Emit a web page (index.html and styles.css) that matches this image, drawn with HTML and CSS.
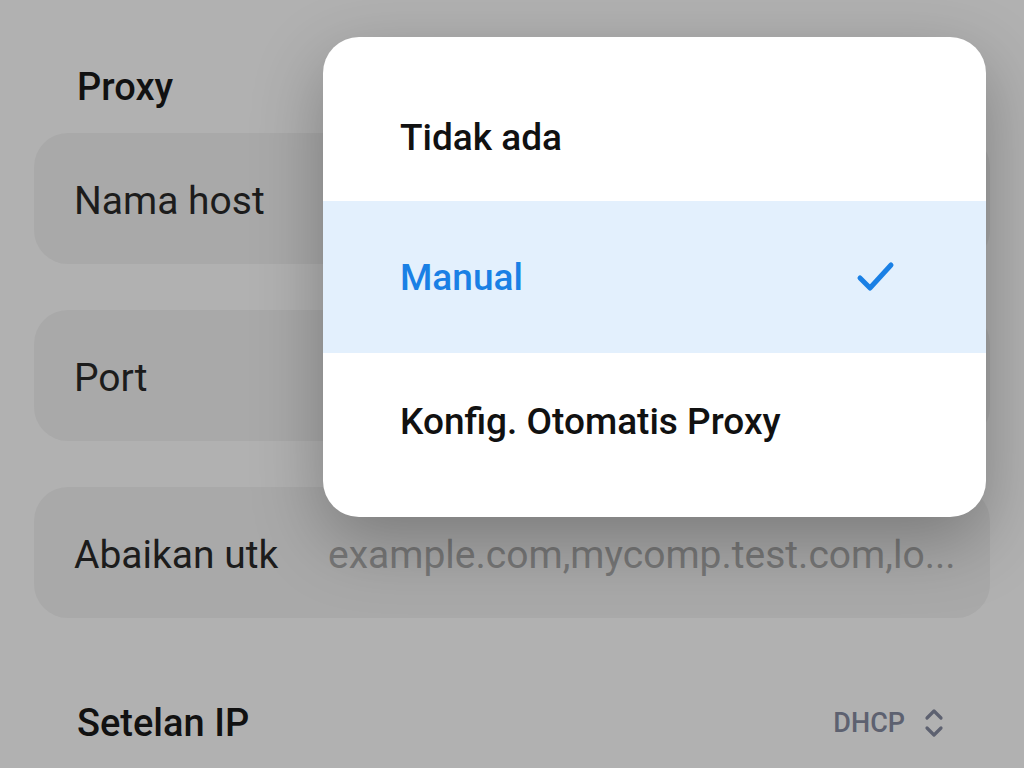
FILE: index.html
```html
<!DOCTYPE html>
<html lang="id">
<head>
  <meta charset="UTF-8">
  <title>Proxy</title>
  <link rel="stylesheet" href="styles.css">
</head>
<body>
  <div class="settings">
    <div class="section-title">Proxy</div>
    <div class="field">
      <span class="field-label">Nama host</span>
    </div>
    <div class="field">
      <span class="field-label">Port</span>
    </div>
    <div class="field">
      <span class="field-label">Abaikan utk</span>
      <span class="placeholder">example.com,mycomp.test.com,lo...</span>
    </div>
    <div class="row">
      <span class="row-label">Setelan IP</span>
      <span class="row-value">
        DHCP
        <svg class="chevrons" width="24" height="32" viewBox="0 0 24 32">
          <path d="M5 11 L12 4 L19 11" fill="none" stroke="#5d6170" stroke-width="3.2" stroke-linecap="round" stroke-linejoin="round"/>
          <path d="M5 21 L12 28 L19 21" fill="none" stroke="#5d6170" stroke-width="3.2" stroke-linecap="round" stroke-linejoin="round"/>
        </svg>
      </span>
    </div>
  </div>

  <div class="menu">
    <div class="menu-item first">Tidak ada</div>
    <div class="menu-item selected">
      Manual
      <svg class="check" width="42" height="34" viewBox="0 0 42 34">
        <path d="M5 18 L15 28 L36 5" fill="none" stroke="#1a80e5" stroke-width="5" stroke-linecap="round" stroke-linejoin="round"/>
      </svg>
    </div>
    <div class="menu-item last">Konfig. Otomatis Proxy</div>
  </div>
</body>
</html>
```

FILE: styles.css
```css
body {
  margin: 0;
  background: #b1b1b1;
  font-family: Roboto, "Noto Sans", sans-serif;
  color: #111;
}
.settings {
  padding: 40px 34px 0 34px;
}
.section-title {
  height: 93px;
  display: flex;
  align-items: center;
  padding-left: 43px;
  font-size: 38px;
  font-weight: 500;
}
.field {
  height: 131px;
  margin-bottom: 46px;
  border-radius: 34px;
  background: #a9a9a9;
  display: flex;
  align-items: center;
  padding: 4px 0 0 40px;
  box-sizing: border-box;
  font-size: 39px;
}
.field-label {
  width: 254px;
  color: #1c1c1c;
}
.placeholder {
  color: #777777;
}
.row {
  height: 120px;
  margin-top: -1px;
  display: flex;
  align-items: center;
  justify-content: space-between;
  padding: 0 44px 0 43px;
}
.row-label {
  font-size: 38px;
  font-weight: 500;
}
.row-value {
  display: flex;
  align-items: center;
  gap: 17px;
  font-size: 27px;
  font-weight: 500;
  color: #5d6170;
}
.chevrons {
  display: block;
}
.menu {
  position: absolute;
  left: 323px;
  top: 37px;
  width: 663px;
  padding: 36px 0 28px 0;
  background: #ffffff;
  border-radius: 36px;
  overflow: hidden;
  box-shadow: 0 24px 70px rgba(0, 0, 0, 0.28);
}
.menu-item {
  display: flex;
  align-items: center;
  justify-content: space-between;
  padding: 0 89px 0 77px;
  font-size: 37px;
  font-weight: 500;
  color: #111;
}
.menu-item.first {
  height: 128px;
}
.menu-item.selected {
  height: 152px;
  background: #e3f0fd;
  color: #1a80e5;
}
.menu-item.last {
  height: 136px;
}
.check {
  display: block;
}
```
